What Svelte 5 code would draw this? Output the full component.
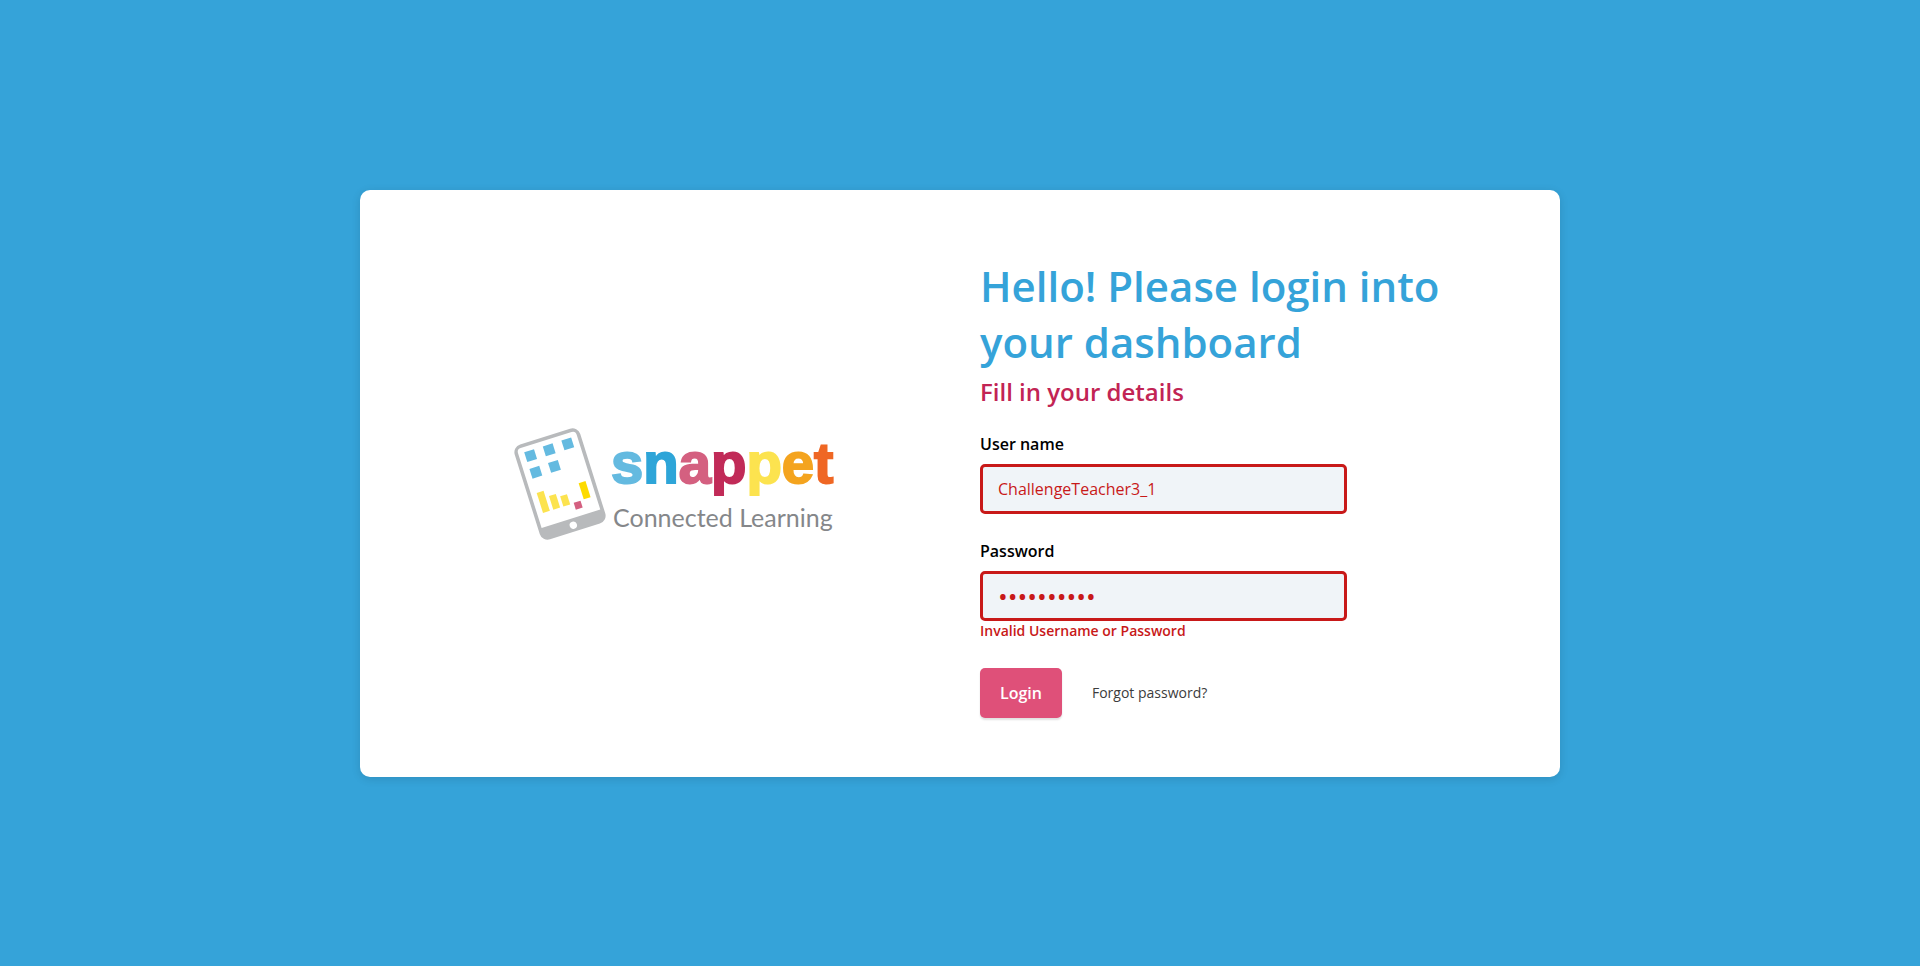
<script>
  let username = $state('ChallengeTeacher3_1');
  let password = $state('challenge3');

  const tiles = [[-24, -40], [-5, -40], [14, -40], [-24, -23], [-5, -23]];
  const letters = [
    ['s', '#64bae0'], ['n', '#2ea5d8'], ['a', '#d46080'], ['p', '#c12b58'],
    ['p', '#fce34f'], ['e', '#f4a41f'], ['t', '#ef6724']
  ];
</script>

<main>
  <section class="card">
    <div class="brand">
      <svg class="logo" viewBox="0 0 324 116" role="img" aria-label="snappet Connected Learning">
        <g transform="translate(47 58) rotate(-17.5) scale(1.025)">
          <rect x="-33.5" y="-48.5" width="67" height="97" rx="8" fill="#b8babc" />
          <path d="M-30-41a4 4 0 0 1 4-4h52a4 4 0 0 1 4 4v76.500h-60z" fill="#fff" />
          <circle cx="0.3" cy="42.2" r="3.6" fill="#fff" />
          {#each tiles as [x, y]}
            <rect {x} {y} width="10" height="10" fill="#64bae0" />
          {/each}
          <rect x="-24.300" y="1.500" width="7" height="20.500" fill="#fce34f" />
          <rect x="-13.800" y="8" width="7" height="14" fill="#fce34f" />
          <rect x="-3.500" y="11.500" width="7" height="10.500" fill="#fce34f" />
          <rect x="17.600" y="4.700" width="7" height="16.500" fill="#fddb00" />
          <rect x="7.200" y="21.500" width="7" height="7" fill="#d46080" />
        </g>
        <text class="word" x="98" y="57">{#each letters as [l, c]}<tspan fill={c} stroke={c}>{l}</tspan>{/each}</text>
        <text class="tag" x="100" y="101">Connected Learning</text>
      </svg>
    </div>
    <form onsubmit={(e) => e.preventDefault()}>
      <h1>Hello! Please login into your dashboard</h1>
      <h2>Fill in your details</h2>
      <div class="field">
        <label for="username">User name</label>
        <input id="username" type="text" bind:value={username} />
      </div>
      <div class="field">
        <label for="password">Password</label>
        <input id="password" type="password" bind:value={password} />
        <p class="error">Invalid Username or Password</p>
      </div>
      <div class="actions">
        <button type="submit">Login</button>
        <a href="#forgot">Forgot password?</a>
      </div>
    </form>
  </section>
</main>

<style>
  :global(body) {
    margin: 0;
    background: #35a3d9;
  }
  main {
    min-height: 100vh;
    box-sizing: border-box;
    padding: 24px;
    display: flex;
    align-items: center;
    justify-content: center;
    font-family: "Open Sans", "Noto Sans", sans-serif;
    font-size: 16px;
    line-height: 24px;
    color: #000;
  }
  .card {
    width: 100%;
    max-width: 1200px;
    box-sizing: border-box;
    padding: 68px 80px 59px 10px;
    display: grid;
    grid-template-columns: 610px 1fr;
    align-items: center;
    background: #fff;
    border-radius: 10px;
    box-shadow: 0 2px 10px rgba(0, 0, 0, 0.12);
  }
  .brand {
    display: flex;
    justify-content: center;
  }
  .logo {
    width: 324px;
    height: 116px;
    margin-bottom: 8px;
    overflow: visible;
  }
  .word {
    font-family: "Liberation Sans", Arial, sans-serif;
    font-size: 58px;
    font-weight: 700;
    stroke-width: 2;
  }
  .tag {
    font-family: Lato, sans-serif;
    font-size: 25px;
    fill: #85878a;
  }
  h1 {
    margin: 0 0 4px;
    font-size: 42px;
    line-height: 56px;
    font-weight: 600;
    color: #35a3d9;
  }
  h2 {
    margin: 0 0 22px;
    font-size: 24px;
    line-height: 36px;
    font-weight: 600;
    color: #c22454;
  }
  .field {
    display: flex;
    flex-direction: column;
    max-width: 367px;
    margin-bottom: 25px;
  }
  label {
    margin-bottom: 8px;
    font-weight: 600;
  }
  input {
    height: 50px;
    box-sizing: border-box;
    padding: 0 15px;
    border: 3px solid #c81919;
    border-radius: 5px;
    background: #f0f4f8;
    color: #c81919;
    font: inherit;
    outline: none;
  }
  input[type="password"] {
    font-size: 26px;
  }
  .error {
    margin: 0;
    font-size: 14px;
    line-height: 20px;
    font-weight: 600;
    color: #c81919;
  }
  .actions {
    display: flex;
    align-items: center;
    gap: 30px;
    padding-top: 2px;
  }
  button {
    height: 50px;
    padding: 0 20px;
    border: 0;
    border-radius: 5px;
    background: #df5079;
    color: #fff;
    font: inherit;
    font-weight: 600;
    box-shadow: 0 2px 2px rgba(0, 0, 0, 0.12);
    cursor: pointer;
  }
  a {
    font-size: 14px;
    color: #3c3c3c;
    text-decoration: none;
  }
</style>
